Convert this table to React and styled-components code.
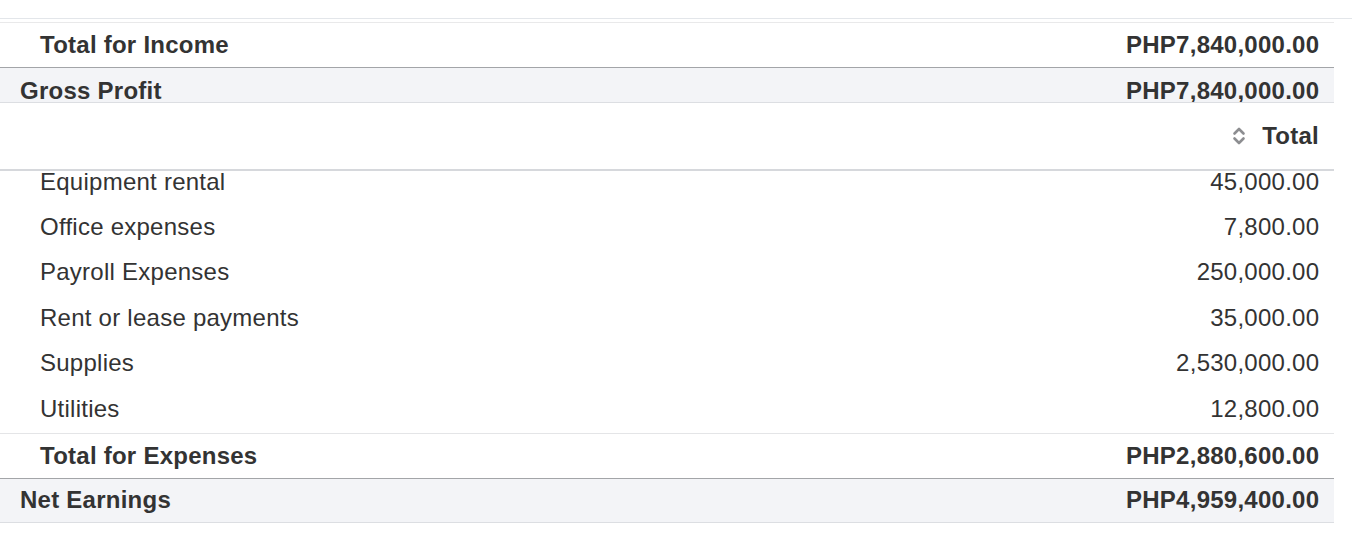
import React from "react";
import styled, { createGlobalStyle, css } from "styled-components";

const Global = createGlobalStyle`
  html, body {
    margin: 0;
    padding: 0;
    background: #ffffff;
  }
  body {
    font-family: "Liberation Sans", Arial, "Helvetica Neue", sans-serif;
    color: #333333;
  }
`;

const Page = styled.div`
  width: 1352px;
  height: 540px;
  overflow: hidden;
  background: #ffffff;
`;

const TopStrip = styled.div`
  height: 18px;
  border-bottom: 1px solid #e3e6ea;
`;

const Table = styled.div`
  width: 1334px;
  margin-top: 3px;
  border-top: 1px solid #e9e9ea;
  display: flex;
  flex-direction: column;
`;

const Row = styled.div`
  box-sizing: border-box;
  display: flex;
  justify-content: space-between;
  align-items: ${(p) => p.$align || "center"};
  height: ${(p) => p.$h}px;
  padding: ${(p) => p.$pt || 0}px 15px ${(p) => p.$pb || 0}px
    ${(p) => (p.$indent ? 40 : 20)}px;
  overflow: hidden;
  font-size: 24px;
  line-height: 28px;
  letter-spacing: 0.25px;
  font-weight: ${(p) => (p.$bold ? 700 : 400)};
  background: ${(p) => (p.$shaded ? "#f3f4f7" : "#ffffff")};
  ${(p) =>
    p.$topLine &&
    css`
      border-top: 1px solid #e4e5e7;
    `}
  ${(p) =>
    p.$bottom === "dark" &&
    css`
      border-bottom: 1px solid #a3a5a8;
    `}
  ${(p) =>
    p.$bottom === "light" &&
    css`
      border-bottom: 1px solid #dcdee2;
    `}
  ${(p) =>
    p.$bottom === "head" &&
    css`
      border-bottom: 2px solid #d6d8dc;
    `}
`;

const Label = styled.span`
  white-space: nowrap;
`;

const Amount = styled.span`
  white-space: nowrap;
  text-align: right;
  margin-right: -0.25px;
`;

const HeadCell = styled.div`
  display: flex;
  align-items: center;
  gap: 16px;
  margin-left: auto;
  font-weight: 700;
`;

const SortIcon = styled.svg`
  width: 14px;
  height: 22px;
  display: block;
`;

const Sort = () => (
  <SortIcon viewBox="0 0 14 22" fill="none" stroke="#8d8e91" strokeWidth="2.6" strokeLinecap="round" strokeLinejoin="round">
    <polyline points="2.5,8.5 7,4 11.5,8.5" />
    <polyline points="2.5,13.5 7,18 11.5,13.5" />
  </SortIcon>
);

const expenses = [
  ["Office expenses", "7,800.00"],
  ["Payroll Expenses", "250,000.00"],
  ["Rent or lease payments", "35,000.00"],
  ["Supplies", "2,530,000.00"],
  ["Utilities", "12,800.00"],
];

export default function App() {
  return (
    <Page>
      <Global />
      <TopStrip />
      <Table>
        <Row $h={45} $indent $bold $bottom="dark">
          <Label>Total for Income</Label>
          <Amount>PHP7,840,000.00</Amount>
        </Row>
        <Row $h={35} $bold $shaded $align="flex-start" $pt={9} $bottom="light">
          <Label>Gross Profit</Label>
          <Amount>PHP7,840,000.00</Amount>
        </Row>
        <Row $h={68} $bold $bottom="head">
          <HeadCell>
            <Sort />
            <span>Total</span>
          </HeadCell>
        </Row>
        <Row $h={34.5} $indent $align="flex-end" $pb={10}>
          <Label>Equipment rental</Label>
          <Amount>45,000.00</Amount>
        </Row>
        {expenses.map(([name, value]) => (
          <Row key={name} $h={45.5} $indent $pb={3}>
            <Label>{name}</Label>
            <Amount>{value}</Amount>
          </Row>
        ))}
        <Row $h={46} $indent $bold $topLine $bottom="dark">
          <Label>Total for Expenses</Label>
          <Amount>PHP2,880,600.00</Amount>
        </Row>
        <Row $h={44} $bold $shaded $pb={1} $bottom="light">
          <Label>Net Earnings</Label>
          <Amount>PHP4,959,400.00</Amount>
        </Row>
      </Table>
    </Page>
  );
}
